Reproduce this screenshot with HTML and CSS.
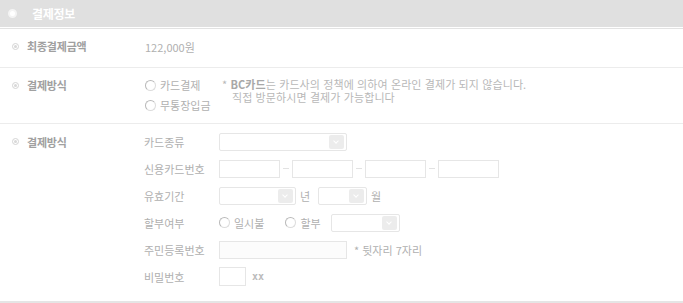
FILE: index.html
```html
<!DOCTYPE html>
<html lang="ko">
<head>
<meta charset="utf-8">
<link rel="stylesheet" href="styles.css">
</head>
<body>
<div class="panel">
  <div class="header">
    <span class="h-icon"></span>
    <span class="h-title">결제정보</span>
  </div>
  <div class="header-line"></div>

  <div class="section s1">
    <div class="label"><span class="bullet"></span>최종결제금액</div>
    <div class="content"><span class="value">122,000원</span></div>
  </div>

  <div class="section s2">
    <div class="label"><span class="bullet"></span>결제방식</div>
    <div class="content pay">
      <div class="radios">
        <div class="radio-row"><span class="radio"></span>카드결제</div>
        <div class="radio-row"><span class="radio"></span>무통장입금</div>
      </div>
      <div class="notice">
        <div class="nline">* <b>BC카드</b>는 카드사의 정책에 의하여 온라인 결제가 되지 않습니다.</div>
        <div class="nline indent">직접 방문하시면 결제가 가능합니다</div>
      </div>
    </div>
  </div>

  <div class="section s3">
    <div class="label"><span class="bullet"></span>결제방식</div>
    <div class="content form">
      <div class="frow">
        <span class="flabel">카드종류</span>
        <span class="select w128"><span class="sbtn"></span></span>
      </div>
      <div class="frow">
        <span class="flabel">신용카드번호</span>
        <span class="input w61"></span><span class="dash"></span>
        <span class="input w61"></span><span class="dash"></span>
        <span class="input w61"></span><span class="dash"></span>
        <span class="input w61"></span>
      </div>
      <div class="frow">
        <span class="flabel">유효기간</span>
        <span class="select w77"><span class="sbtn"></span></span>
        <span class="unit">년</span>
        <span class="select w49"><span class="sbtn"></span></span>
        <span class="unit">월</span>
      </div>
      <div class="frow">
        <span class="flabel">할부여부</span>
        <span class="radio"></span><span class="rtext">일시불</span>
        <span class="radio gap"></span><span class="rtext">할부</span>
        <span class="select w69 ml"><span class="sbtn"></span></span>
      </div>
      <div class="frow">
        <span class="flabel">주민등록번호</span>
        <span class="input w128 filled"></span>
        <span class="hint">* 뒷자리 7자리</span>
      </div>
      <div class="frow">
        <span class="flabel">비밀번호</span>
        <span class="input w27"></span>
        <span class="xx">xx</span>
      </div>
    </div>
  </div>
  <div class="bottom-line"></div>
</div>
</body>
</html>
```

FILE: styles.css
```css
html, body {
  margin: 0;
  padding: 0;
  background: #fff;
}
body {
  font-family: "Noto Sans CJK KR", "Noto Sans", sans-serif;
  font-size: 11px;
  color: #b0b0b0;
}
.panel {
  width: 683px;
}
.header {
  height: 27px;
  background: #e0e0e0;
  display: flex;
  align-items: center;
}
.h-icon {
  width: 9px;
  height: 9px;
  border-radius: 50%;
  background: #fff;
  margin-left: 8px;
  margin-right: 15px;
  box-sizing: border-box;
  border: 2px solid #f4f4f4;
}
.h-title {
  color: #fff;
  font-weight: bold;
  font-size: 12px;
  letter-spacing: -0.3px;
}
.header-line {
  margin-top: 1px;
  height: 1px;
  background: #e2e2e2;
}
.section {
  display: flex;
  border-bottom: 1px solid #ececec;
}
.label {
  width: 145px;
  display: flex;
  align-items: center;
  height: 14px;
  line-height: 14px;
  color: #a0a0a0;
  font-weight: bold;
  letter-spacing: -0.2px;
  flex: none;
}
.bullet {
  width: 7px;
  height: 7px;
  box-sizing: border-box;
  border: 1px solid #d4d4d4;
  border-radius: 50%;
  margin-left: 12px;
  margin-right: 8px;
  position: relative;
}
.bullet::after {
  content: "";
  position: absolute;
  left: 1px;
  top: 1px;
  width: 3px;
  height: 3px;
  border-radius: 50%;
  background: #d8d8d8;
}
.s1 {
  padding: 10px 0 12px;
}
.value {
  line-height: 14px;
}
.s2 {
  padding: 7px 0 8px;
  align-items: flex-start;
}
.s2 .label {
  height: 20px;
}
.pay {
  display: flex;
}
.radios {
  width: 77px;
}
.radio-row {
  height: 20px;
  display: flex;
  align-items: center;
}
.radio {
  width: 11px;
  height: 11px;
  box-sizing: border-box;
  border-radius: 50%;
  border: 1px solid #dcdcdc;
  border-top-color: #b9b9b9;
  border-left-color: #b9b9b9;
  margin-right: 4px;
  flex: none;
  background: #fff;
}
.notice {
  padding-top: 3px;
  color: #b8b8b8;
  letter-spacing: 0.1px;
}
.nline {
  height: 13px;
  line-height: 13px;
  white-space: nowrap;
}
.notice b {
  color: #a8a8a8;
}
.indent {
  padding-left: 10px;
}
.s3 {
  padding: 4px 0 11px;
  border-bottom: none;
  align-items: flex-start;
}
.s3 .label {
  height: 27px;
}
.form {
  display: flex;
  flex-direction: column;
}
.frow {
  height: 27px;
  display: flex;
  align-items: center;
}
.flabel {
  width: 75px;
  margin-left: -1px;
  flex: none;
}
.input, .select {
  display: inline-flex;
  height: 18px;
  box-sizing: border-box;
  border: 1px solid #e6e6e6;
  flex: none;
}
.select {
  border-radius: 2px;
  justify-content: flex-end;
  align-items: center;
  padding-right: 2px;
}
.sbtn {
  width: 15px;
  height: 14px;
  background: #ececec;
  border-radius: 2px;
  position: relative;
}
.sbtn::after {
  content: "";
  position: absolute;
  left: 5px;
  top: 4px;
  width: 3px;
  height: 3px;
  border-right: 1.5px solid #fff;
  border-bottom: 1.5px solid #fff;
  transform: rotate(45deg);
}
.w128 { width: 128px; }
.w61 { width: 61px; }
.w77 { width: 77px; }
.w49 { width: 49px; }
.w69 { width: 69px; }
.w27 { width: 27px; height: 19px; }
.input.filled {
  background: #fcfcfc;
}
.dash {
  width: 6px;
  height: 1px;
  background: #e2e2e2;
  margin: 0 3px;
  flex: none;
}
.unit {
  margin: 0 5px 0 4px;
  width: 13px;
}
.radio.gap {
  margin-left: 21px;
}
.ml {
  margin-left: 10px;
}
.hint {
  margin-left: 7px;
}
.xx {
  margin-left: 6px;
  font-family: "DejaVu Sans Mono", monospace;
  font-weight: bold;
  color: #bbb;
  font-size: 10px;
}
.bottom-line {
  height: 2px;
  background: #e5e5e5;
}
```
